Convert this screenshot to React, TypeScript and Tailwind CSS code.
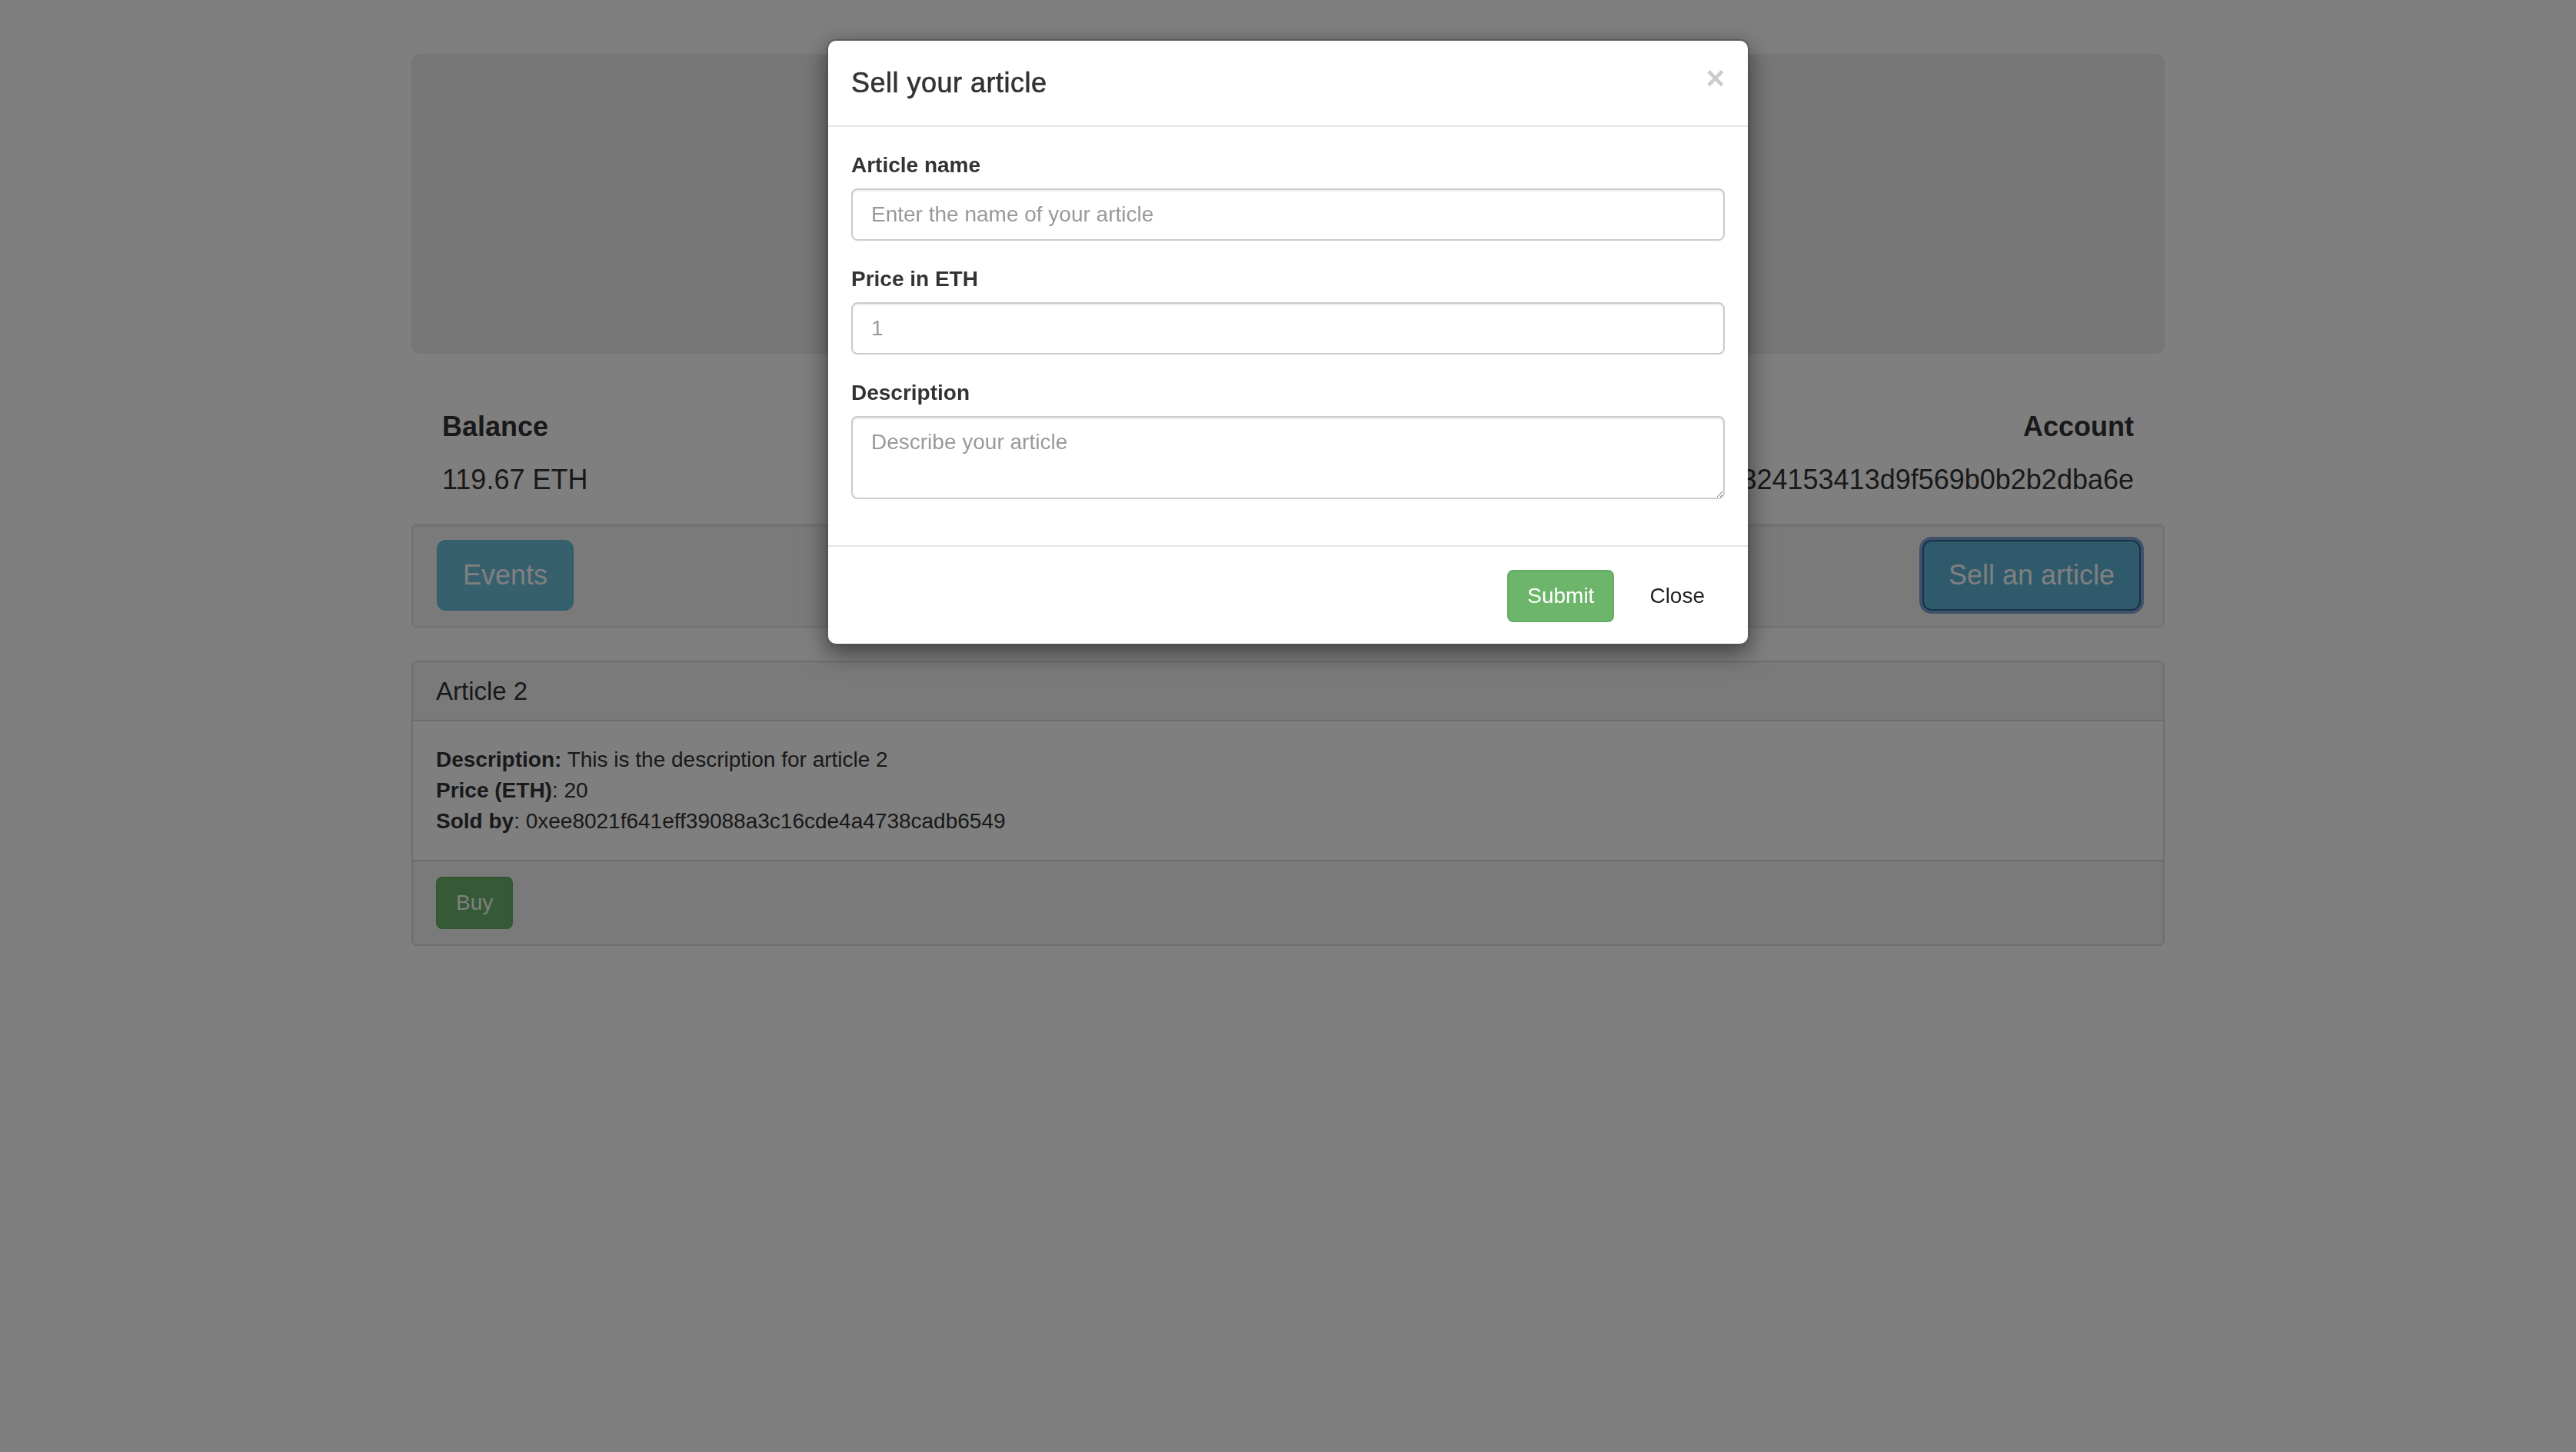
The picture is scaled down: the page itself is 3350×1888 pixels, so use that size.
import React from "react";

export default function App() {
  return (
    <div className="relative min-h-screen bg-white text-[#333] text-[28px] leading-[40px] font-['Liberation_Sans','Helvetica_Neue',Arial,sans-serif]">
      <div className="mx-auto w-[2340px] px-[30px] pt-[70px] pb-[60px]">
        <div className="h-[390px] rounded-[12px] bg-[#eeeeee]" />

        <div className="mt-[75px] flex justify-between px-[40px]">
          <div>
            <h4 className="text-[36px] leading-[40px] font-bold">Balance</h4>
            <p className="mt-[29px] text-[36px] leading-[40px]">119.67 ETH</p>
          </div>
          <div className="text-right">
            <h4 className="text-[36px] leading-[40px] font-bold">Account</h4>
            <p className="mt-[29px] text-[36px] leading-[40px]">0xc5fdf4076b8f3a324153413d9f569b0b2b2dba6e</p>
          </div>
        </div>

        <div className="mt-[37px] flex items-center justify-between rounded-[6px] border-2 border-[#e3e3e3] bg-[#f5f5f5] pt-[19px] pb-[20px] pl-[31px] pr-[29px] shadow-[inset_0_2px_2px_rgba(0,0,0,0.05)]">
          <button className="rounded-[12px] border-2 border-[#62bad8] bg-[#6fc0dd] px-[32px] py-[20px] text-[36px] leading-[48px] text-white">
            Events
          </button>
          <button className="rounded-[12px] border-2 border-[#2e6496] bg-[#5cb4d6] px-[32px] py-[20px] text-[36px] leading-[48px] text-white shadow-[0_0_0_4px_rgba(100,145,205,0.8)]">
            Sell an article
          </button>
        </div>

        <div className="mt-[43px] overflow-hidden rounded-[8px] border-2 border-[#dddddd] bg-white">
          <div className="border-b-2 border-[#dddddd] bg-[#f5f5f5] px-[30px] py-[20px]">
            <h3 className="text-[33px] leading-[35px]">Article 2</h3>
          </div>
          <div className="p-[30px]">
            <div>
              <strong>Description:</strong> This is the description for article 2
            </div>
            <div>
              <strong>Price (ETH)</strong>: 20
            </div>
            <div>
              <strong>Sold by</strong>: 0xee8021f641eff39088a3c16cde4a4738cadb6549
            </div>
          </div>
          <div className="border-t-2 border-[#dddddd] bg-[#f5f5f5] px-[30px] py-[20px]">
            <button className="rounded-[8px] border-2 border-[#63ad61] bg-[#6db56b] px-[24px] py-[12px] text-[28px] leading-[40px] text-white">
              Buy
            </button>
          </div>
        </div>
      </div>

      <div className="fixed inset-0 z-10 bg-black/50" />

      <div className="absolute left-[1075px] top-[51px] z-20 w-[1200px] rounded-[12px] border-2 border-black/20 bg-white bg-clip-padding shadow-[0_10px_30px_rgba(0,0,0,0.5)]">
        <div className="flex items-start justify-between border-b-2 border-[#e5e5e5] p-[30px]">
          <h4 className="text-[36px] leading-[50px] tracking-[0.5px] text-[#333] [-webkit-text-stroke:0.6px_#333]">Sell your article</h4>
          <button className="mt-[-2px] text-[42px] font-bold leading-[42px] text-black opacity-20">×</button>
        </div>
        <div className="p-[30px]">
          <div className="mb-[30px]">
            <label className="mb-[10px] block font-bold">Article name</label>
            <input
              type="text"
              placeholder="Enter the name of your article"
              className="block h-[68px] w-full rounded-[8px] border-2 border-[#cccccc] px-[24px] py-[12px] text-[28px] leading-[40px] text-[#555] shadow-[inset_0_2px_2px_rgba(0,0,0,0.075)] outline-none placeholder:text-[#999]"
            />
          </div>
          <div className="mb-[30px]">
            <label className="mb-[10px] block font-bold">Price in ETH</label>
            <input
              type="number"
              placeholder="1"
              className="block h-[68px] w-full rounded-[8px] border-2 border-[#cccccc] px-[24px] py-[12px] text-[28px] leading-[40px] text-[#555] shadow-[inset_0_2px_2px_rgba(0,0,0,0.075)] outline-none placeholder:text-[#999]"
            />
          </div>
          <div className="mb-[30px]">
            <label className="mb-[10px] block font-bold">Description</label>
            <textarea
              rows={2}
              placeholder="Describe your article"
              className="block h-[108px] w-full rounded-[8px] border-2 border-[#cccccc] px-[24px] py-[12px] text-[28px] leading-[40px] text-[#555] shadow-[inset_0_2px_2px_rgba(0,0,0,0.075)] outline-none placeholder:text-[#999]"
            />
          </div>
        </div>
        <div className="flex items-center justify-end gap-[20px] border-t-2 border-[#e5e5e5] px-[30px] pt-[30px] pb-[28px]">
          <button className="rounded-[8px] border-2 border-[#63ad61] bg-[#6db56b] px-[24px] py-[12px] text-[28px] leading-[40px] text-white">
            Submit
          </button>
          <button className="rounded-[8px] border-2 border-transparent px-[24px] py-[12px] text-[28px] leading-[40px] text-[#222]">
            Close
          </button>
        </div>
      </div>
    </div>
  );
}
